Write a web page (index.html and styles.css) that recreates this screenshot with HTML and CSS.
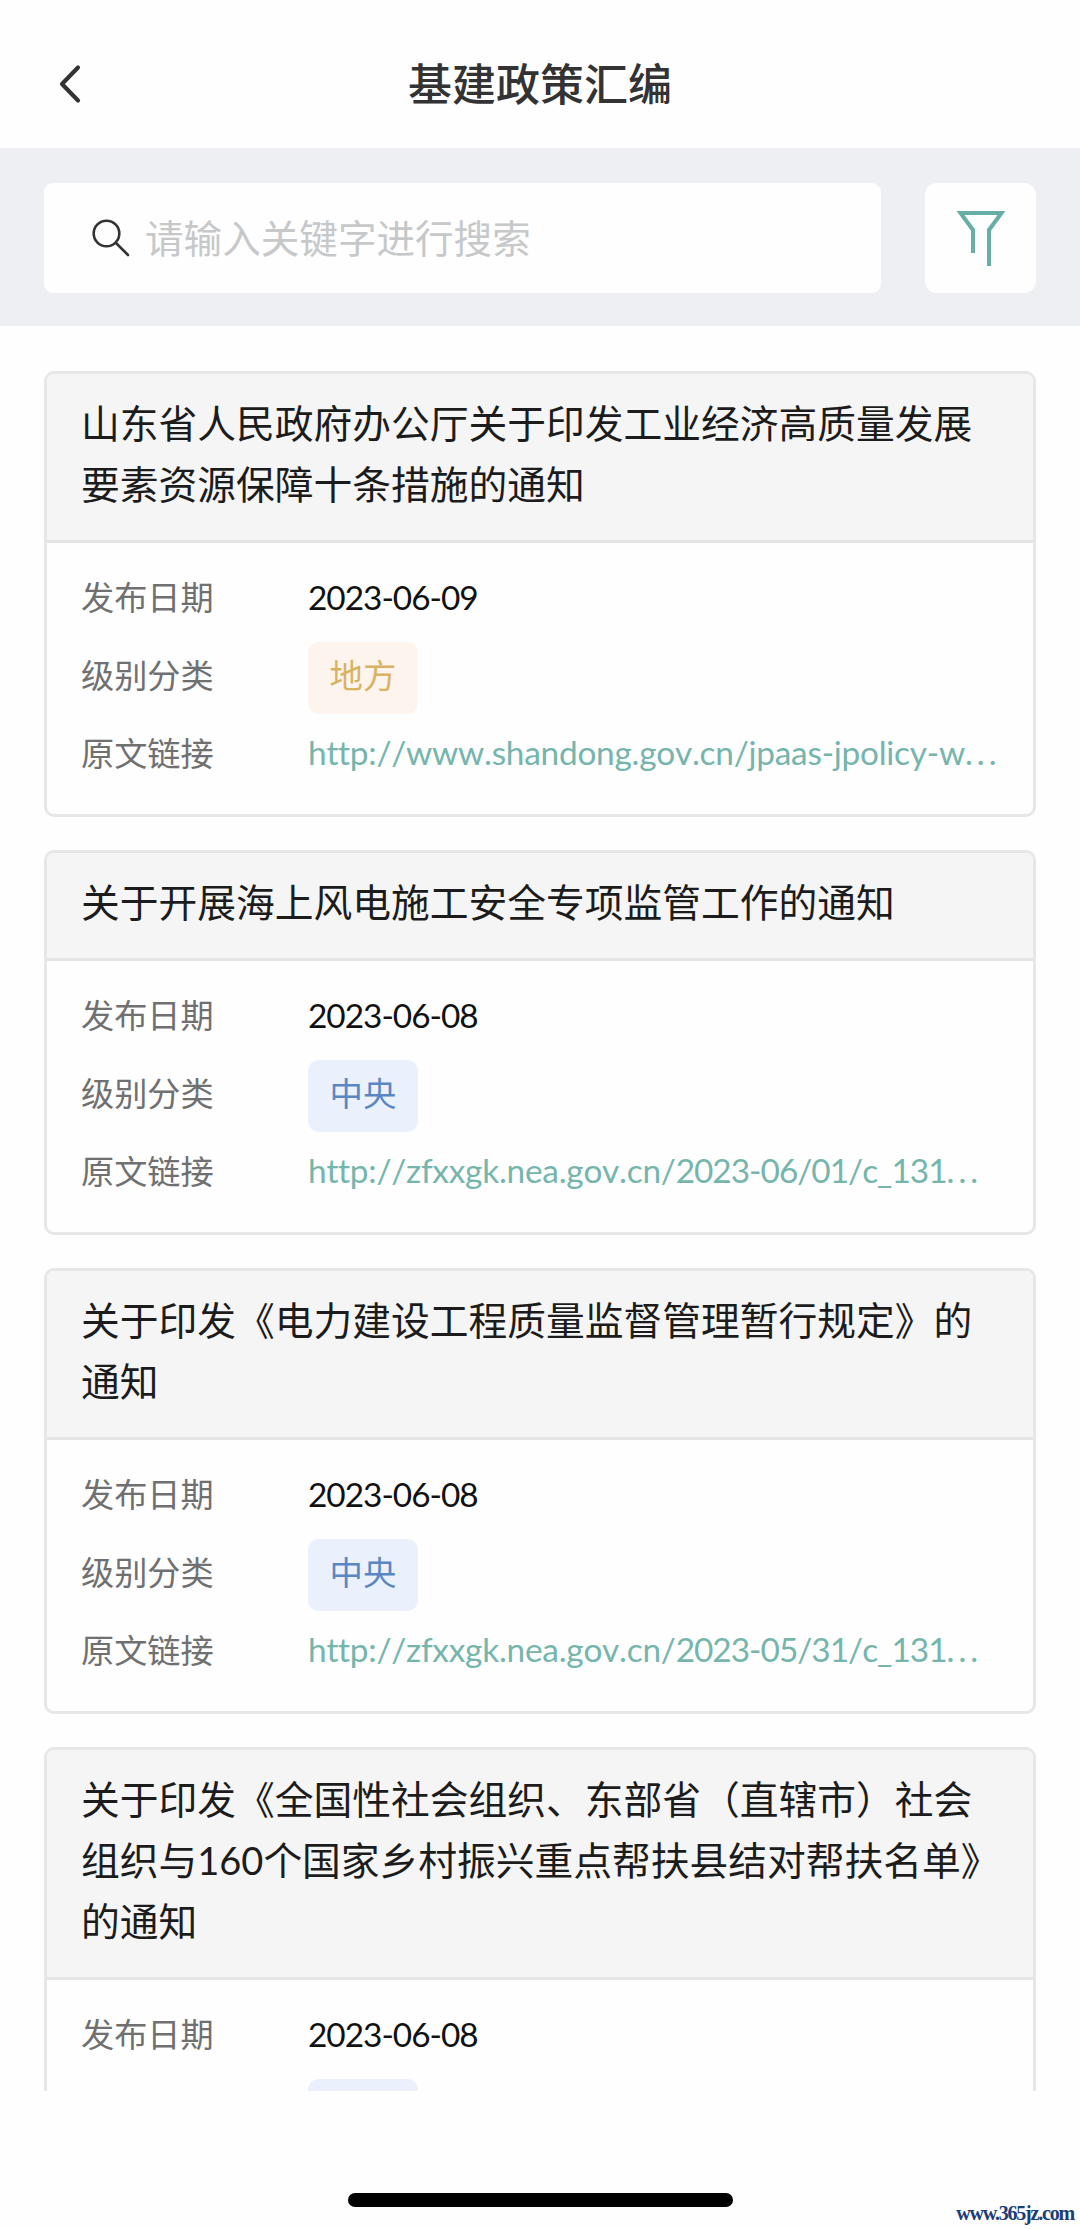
FILE: index.html
```html
<!DOCTYPE html>
<html lang="zh-CN">
<head>
    <meta charset="UTF-8">
    <meta name="viewport" content="width=device-width, initial-scale=1.0">
    <title>基建政策汇编</title>
    <link rel="stylesheet" href="styles.css">
</head>
<body>
    <div class="screen">
        <header class="navbar">
            <svg class="back" viewBox="0 0 24 40" fill="none" stroke="#333" stroke-width="4.2" stroke-linecap="round" stroke-linejoin="round">
                <path d="M20 3.5L4 20L20 36.5"/>
            </svg>
            <h1>基建政策汇编</h1>
        </header>

        <!-- Search -->
        <div class="search-bar">
            <div class="search-box">
                <svg class="search-icon" viewBox="0 0 38 38" fill="none" stroke="#333" stroke-width="2.6" stroke-linecap="round">
                    <circle cx="14.5" cy="14.5" r="12.8"/>
                    <path d="M24 24L36 36"/>
                </svg>
                <span class="placeholder">请输入关键字进行搜索</span>
            </div>
            <div class="filter-button">
                <svg class="filter-icon" viewBox="0 0 50 58" fill="none" stroke="#67aea6" stroke-width="4">
                    <path d="M17 44V21L4.500 4H45.500L33 21V57"/>
                </svg>
            </div>
        </div>

        <!-- Policy list -->
        <main class="list">
            <section class="card">
                <h2>山东省人民政府办公厅关于印发工业经济高质量发展<br>要素资源保障十条措施的通知</h2>
                <div class="card-body">
                    <div class="row"><span class="label">发布日期</span><span class="date">2023-06-09</span></div>
                    <div class="row"><span class="label">级别分类</span><span class="tag local">地方</span></div>
                    <div class="row"><span class="label">原文链接</span><a class="link">http://www.shandong.gov.cn/jpaas-jpolicy-w<span class="dots">...</span></a></div>
                </div>
            </section>

            <section class="card">
                <h2>关于开展海上风电施工安全专项监管工作的通知</h2>
                <div class="card-body">
                    <div class="row"><span class="label">发布日期</span><span class="date">2023-06-08</span></div>
                    <div class="row"><span class="label">级别分类</span><span class="tag central">中央</span></div>
                    <div class="row"><span class="label">原文链接</span><a class="link">http://zfxxgk.nea.gov.cn/<span class="path">2023-06/01/c_131</span><span class="dots">...</span></a></div>
                </div>
            </section>

            <section class="card">
                <h2>关于印发《电力建设工程质量监督管理暂行规定》的<br>通知</h2>
                <div class="card-body">
                    <div class="row"><span class="label">发布日期</span><span class="date">2023-06-08</span></div>
                    <div class="row"><span class="label">级别分类</span><span class="tag central">中央</span></div>
                    <div class="row"><span class="label">原文链接</span><a class="link">http://zfxxgk.nea.gov.cn/<span class="path">2023-05/31/c_131</span><span class="dots">...</span></a></div>
                </div>
            </section>

            <section class="card">
                <h2>关于印发《全国性社会组织、东部省（直辖市）社会<br>组织与<span class="num">160</span>个国家乡村振兴重点帮扶县结对帮扶名单》<br>的通知</h2>
                <div class="card-body">
                    <div class="row"><span class="label">发布日期</span><span class="date">2023-06-08</span></div>
                    <div class="row"><span class="label"></span><span class="tag central"></span></div>
                </div>
            </section>
        </main>

        <footer class="home-area">
            <div class="home-indicator"></div>
        </footer>
        <div class="site-mark">www.365jz.com</div>
    </div>
</body>
</html>
```
FILE: styles.css
```css
* { margin: 0; padding: 0; box-sizing: border-box; }
body {
    font-family: "Noto Sans CJK SC", sans-serif;
    background: #fefefe;
}
.screen {
    width: 1080px;
    height: 2229px;
    display: flex;
    flex-direction: column;
    position: relative;
    overflow: hidden;
}
.navbar {
    height: 148px;
    padding: 19px 58px 0;
    display: grid;
    grid-template-columns: 24px 1fr 24px;
    align-items: center;
    flex-shrink: 0;
}
.back { width: 24px; height: 40px; }
h1 { padding-bottom: 4px; font-size: 44px; line-height: 60px; font-weight: 500; color: #333; text-align: center; }
.search-bar {
    height: 178px;
    padding: 35px 44px 33px;
    display: flex;
    justify-content: space-between;
    background: #eeeff2;
    flex-shrink: 0;
}
.search-box {
    width: 837px;
    border-radius: 9px;
    background: #fefefe;
    padding-left: 48px;
    display: flex;
    align-items: center;
    gap: 15px;
}
.search-icon { width: 38px; height: 38px; }
.placeholder { padding-bottom: 5px; font-size: 38.6px; line-height: 58px; color: #c6c8c9; }
.filter-button {
    width: 111px;
    border-radius: 12px;
    background: #fefefe;
    display: flex;
    align-items: center;
    justify-content: center;
}
.filter-icon { width: 50px; height: 58px; }
.list {
    height: 1765px;
    padding: 45px 44px 0;
    display: flex;
    flex-direction: column;
    gap: 33px;
    overflow: hidden;
    flex-shrink: 0;
}
.card {
    border: 3px solid #e7e7e7;
    border-radius: 10px;
    overflow: hidden;
    flex-shrink: 0;
}
h2 {
    padding: 17px 31px 27px 34px;
    border-bottom: 3px solid #e5e5e5;
    background: #f5f5f5;
    font-size: 38.75px;
    font-weight: 400;
    line-height: 61px;
    color: #1c1c1c;
    white-space: nowrap;
}
.num { font-family: Lato, sans-serif; font-size: 38px; line-height: 1; }
.card-body { padding: 15px 34px 22px; }
.row { height: 78px; display: flex; line-height: 78px; font-size: 33.4px; }
.label { width: 227px; flex-shrink: 0; line-height: 75px; font-size: 33.2px; color: #707070; }
.date { font-family: Lato, sans-serif; letter-spacing: -1px; color: #111; }
.tag {
    width: 110px;
    height: 72px;
    margin-top: 6px;
    border-radius: 11px;
    line-height: 63px;
    text-align: center;
}
.tag.local { background: #fdf4ee; color: #d8b364; }
.tag.central { background: #eaf1fd; color: #5b86c4; }
.link {
    font-family: Lato, sans-serif;
    font-kerning: none;
    font-variant-ligatures: none;
    letter-spacing: -0.25px;
    line-height: 76px;
    color: #75b5ac;
    white-space: nowrap;
}
.path { letter-spacing: -1px; }
.dots { letter-spacing: 4px; }
.home-area { flex: 1; padding-top: 102px; }
.home-indicator { width: 385px; height: 14px; margin: 0 auto; border-radius: 7px; background: #000; }
.site-mark {
    position: absolute;
    right: 6px;
    bottom: 4px;
    font-family: "Liberation Serif", serif;
    font-size: 20px;
    line-height: 24px;
    letter-spacing: -1.2px;
    font-weight: 700;
    color: #1d3c78;
}
```
